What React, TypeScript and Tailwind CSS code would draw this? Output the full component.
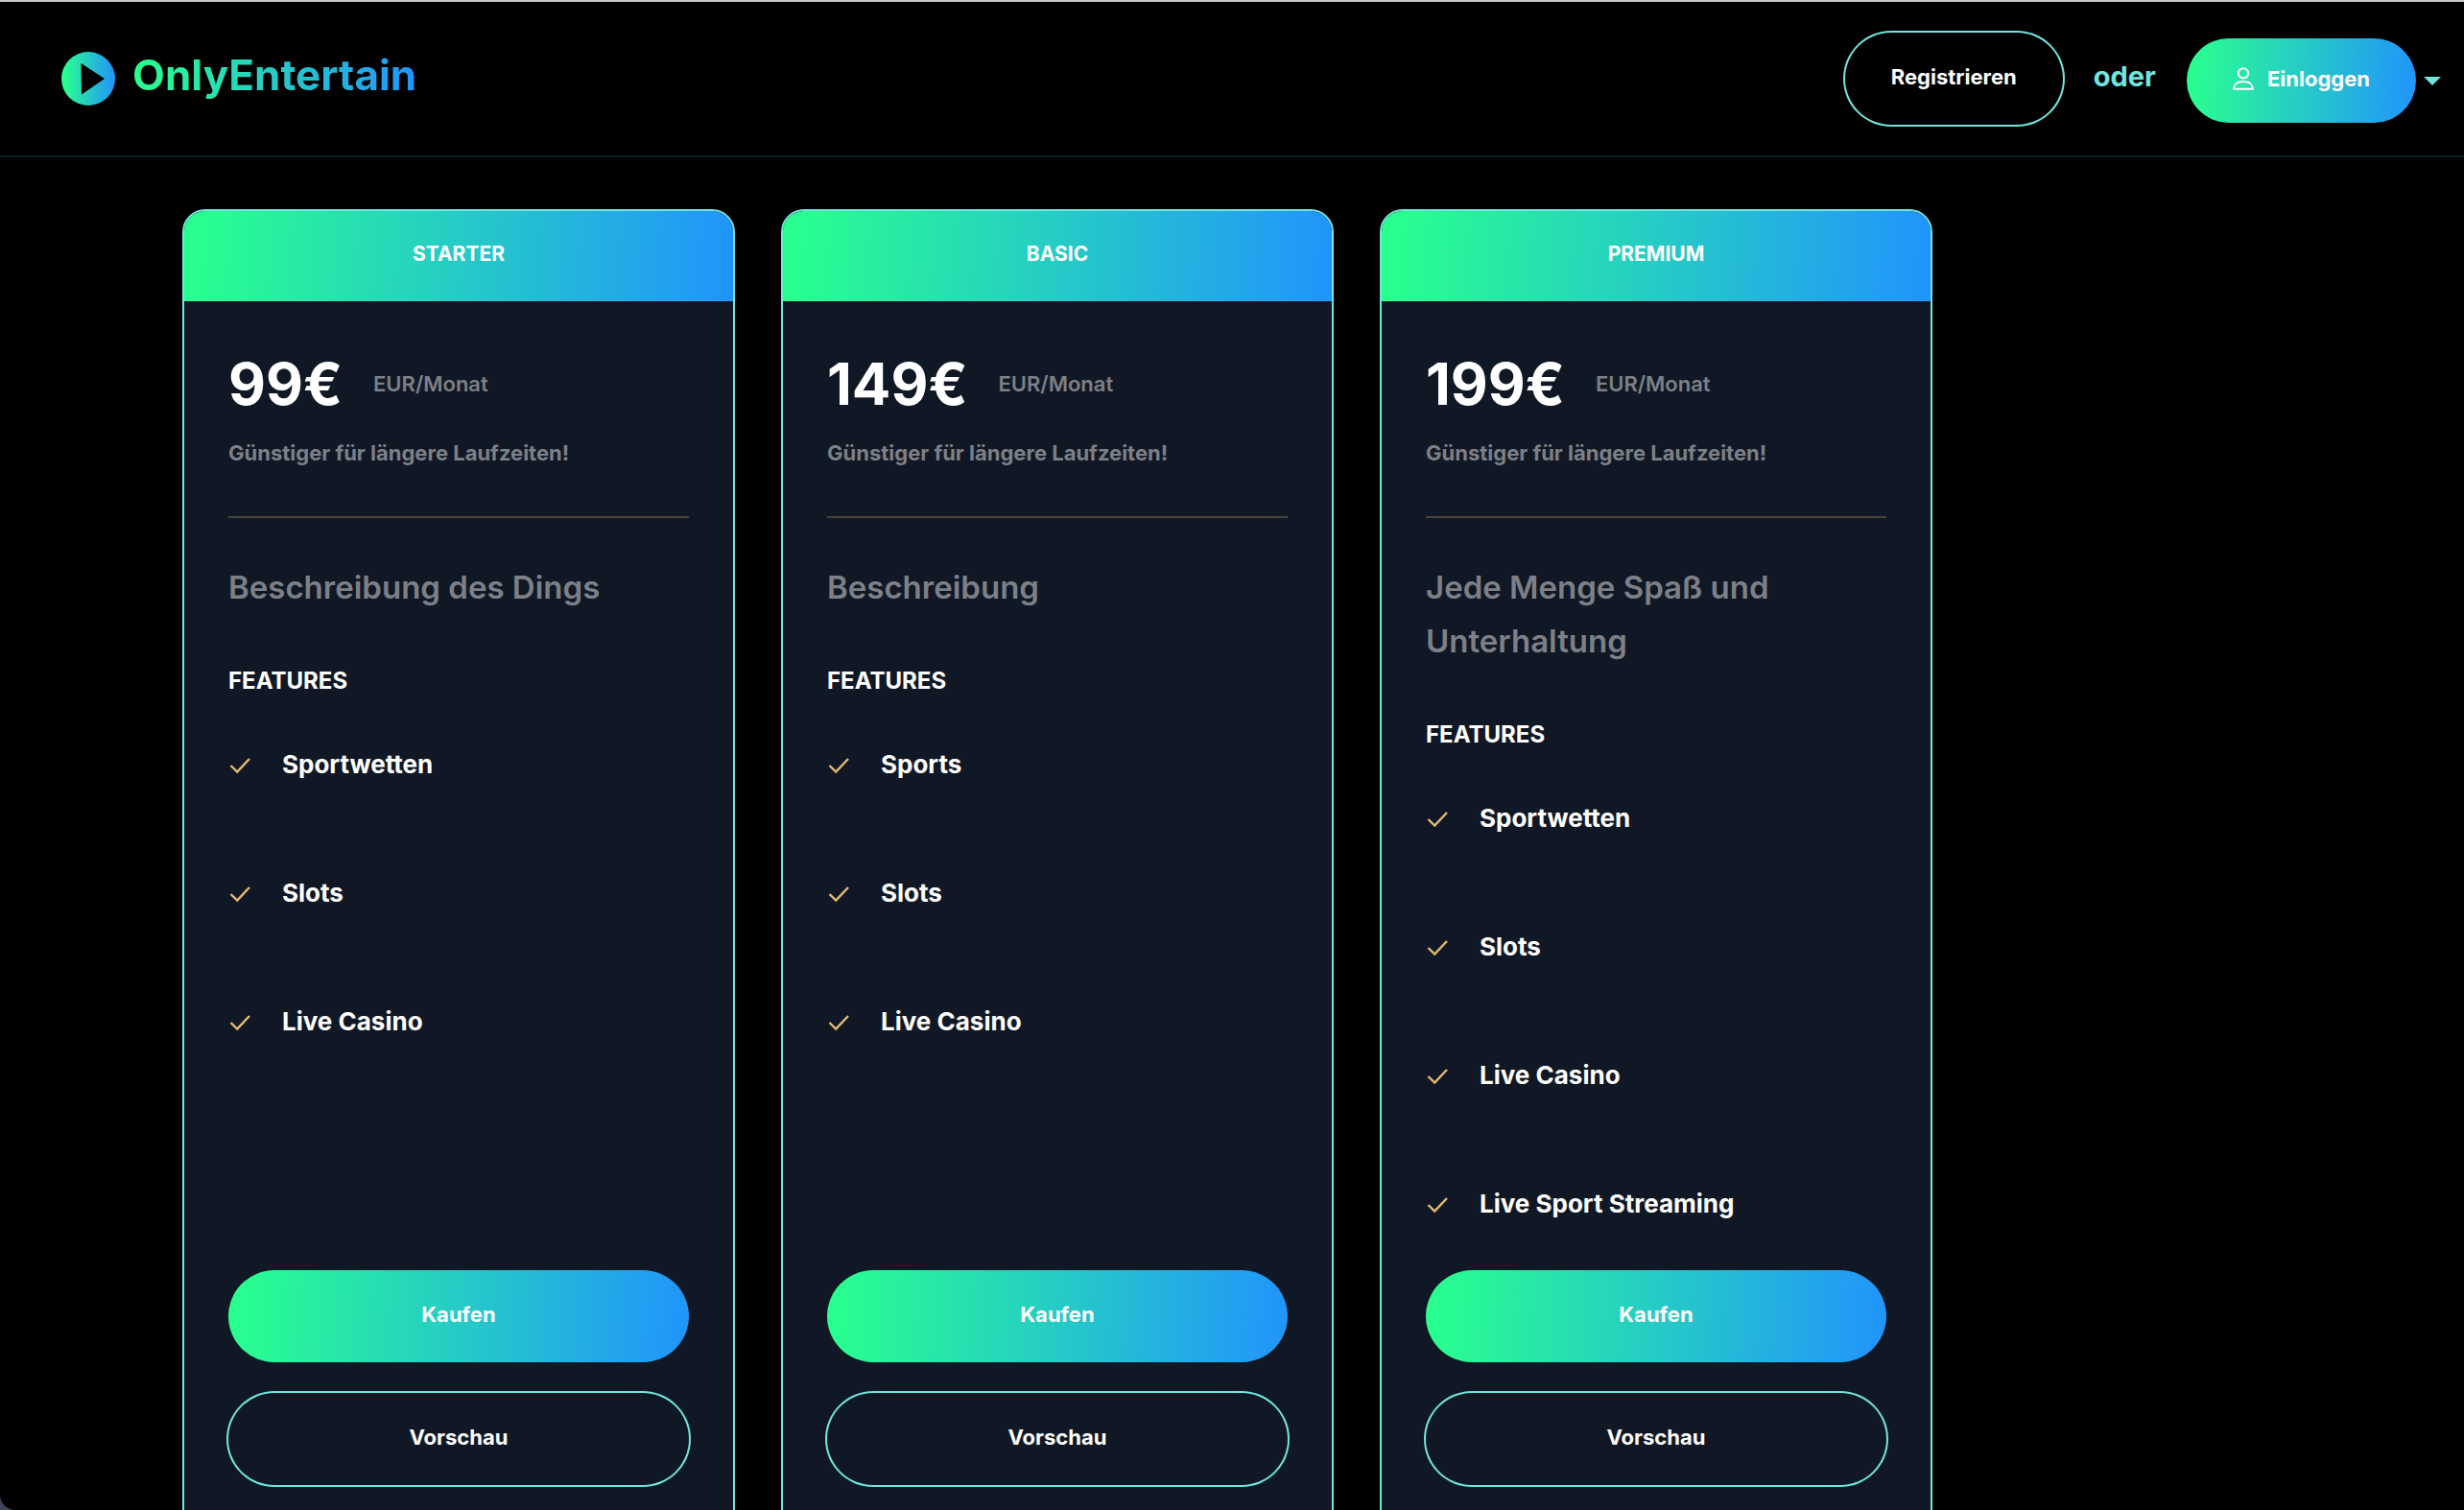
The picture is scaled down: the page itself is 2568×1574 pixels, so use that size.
import clsx from "clsx";

interface Plan {
  name: string;
  price: string;
  description: string;
  features: string[];
}

const plans: Plan[] = [
  {
    name: "Starter",
    price: "99€",
    description: "Beschreibung des Dings",
    features: ["Sportwetten", "Slots", "Live Casino"],
  },
  {
    name: "Basic",
    price: "149€",
    description: "Beschreibung",
    features: ["Sports", "Slots", "Live Casino"],
  },
  {
    name: "Premium",
    price: "199€",
    description: "Jede Menge Spaß und Unterhaltung",
    features: ["Sportwetten", "Slots", "Live Casino", "Live Sport Streaming"],
  },
];

const gradient = "bg-[linear-gradient(93deg,#29ff8f_2%,#26cbc6_50%,#2196fa_98%)]";

const buttonBase =
  "flex items-center justify-center rounded-[48px] pb-1 text-[22px] font-bold leading-8 text-white";

function LogoMark() {
  return (
    <svg aria-hidden="true" className="size-14" viewBox="0 0 56 56">
      <defs>
        <linearGradient id="logo-mark" x1="0" x2="1" y1="0" y2="0">
          <stop offset="0.05" stopColor="#29ff8f" />
          <stop offset="0.5" stopColor="#26cbc6" />
          <stop offset="0.98" stopColor="#2196fa" />
        </linearGradient>
      </defs>
      <circle cx="28" cy="28" fill="url(#logo-mark)" r="28" />
      <path d="M20.5 12 L45 28 L21 44.5 Z" fill="#000" />
    </svg>
  );
}

function UserIcon() {
  return (
    <svg
      aria-hidden="true"
      className="h-6 w-[22px]"
      fill="none"
      stroke="currentColor"
      strokeWidth="2"
      viewBox="0 0 22 24"
    >
      <circle cx="11" cy="6.4" r="5.2" />
      <path d="M1.2 22.8 C1.2 17.8 4.8 15.2 8.6 15.2 H13.4 C17.2 15.2 20.8 17.8 20.8 22.8 Z" />
    </svg>
  );
}

function CheckIcon() {
  return (
    <svg
      aria-hidden="true"
      className="h-6 w-6 shrink-0"
      fill="none"
      stroke="#e5ba73"
      strokeWidth="2.4"
      viewBox="0 0 24 24"
    >
      <path d="M2.5 13 L9.2 19.5 L22 6" />
    </svg>
  );
}

function Header() {
  return (
    <header className="flex h-[164px] items-center justify-between border-t-2 border-b-2 border-t-[#c8c8c8] border-b-[#0f1a1e] pr-6 pl-16">
      <a className="flex items-center gap-[18px]" href="#home">
        <LogoMark />
        <span
          className={clsx(
            gradient,
            "mb-1 bg-clip-text pb-1 text-[44px] font-bold leading-[56px] text-transparent",
          )}
        >
          OnlyEntertain
        </span>
      </a>
      <div className="flex items-center">
        <button
          className={clsx(buttonBase, "h-24 px-12 ring-2 ring-[#71e5dd]")}
          type="button"
        >
          Registrieren
        </button>
        <span className="ml-8 pb-1 text-[29px] font-bold leading-10 text-[#71e5dd]">oder</span>
        <div className="ml-8 flex items-center gap-2 pt-1">
          <button
            className={clsx(buttonBase, gradient, "h-[88px] gap-[14px] px-12")}
            type="button"
          >
            <UserIcon />
            Einloggen
          </button>
          <svg aria-hidden="true" className="h-[9px] w-[18px]" viewBox="0 0 18 9">
            <path d="M0 0 H18 L9 9 Z" fill="#71e5dd" />
          </svg>
        </div>
      </div>
    </header>
  );
}

function PlanCard({ plan }: { plan: Plan }) {
  return (
    <article className="flex flex-col overflow-hidden rounded-3xl border-2 border-[#71e5dd] bg-[#111825]">
      <h2
        className={clsx(
          gradient,
          "pt-[25px] pb-[29px] text-center text-[21px] font-bold uppercase leading-10",
        )}
      >
        {plan.name}
      </h2>
      <div className="flex flex-1 flex-col px-[46px] py-12">
        <div className="flex items-center gap-8 leading-[76px]">
          <span className="text-[60px] font-bold">{plan.price}</span>
          <span className="text-[22px] font-semibold text-[#7d8087]">EUR/Monat</span>
        </div>
        <p className="mt-4 text-[22px] font-bold leading-9 text-[#7d8087]">
          Günstiger für längere Laufzeiten!
        </p>
        <hr className="mt-12 border-t-2 border-[#4a423c]" />
        <p className="mt-11 text-[33px] font-semibold leading-[56px] text-[#7d8087]">
          {plan.description}
        </p>
        <h3 className="mt-12 text-2xl font-bold uppercase leading-[44px]">Features</h3>
        <ul className="mt-11 mb-12 flex flex-col gap-[92px]">
          {plan.features.map((feature) => (
            <li
              className="flex items-center gap-8 text-[26px] font-bold leading-[42px]"
              key={feature}
            >
              <CheckIcon />
              {feature}
            </li>
          ))}
        </ul>
        <div className="mt-auto flex flex-col gap-8">
          <button className={clsx(buttonBase, gradient, "h-24")} type="button">
            Kaufen
          </button>
          <button className={clsx(buttonBase, "h-24 ring-2 ring-[#71e5dd]")} type="button">
            Vorschau
          </button>
        </div>
      </div>
    </article>
  );
}

export default function App() {
  return (
    <div className="h-screen bg-[#3d4558] font-[Inter,sans-serif] text-white">
      <div className="h-full overflow-y-auto rounded-bl-2xl bg-black [scrollbar-width:none]">
        <Header />
        <main className="pt-[54px] pb-24 pl-[190px]">
          <div className="grid max-w-[1824px] grid-cols-3 gap-12">
            {plans.map((plan) => (
              <PlanCard key={plan.name} plan={plan} />
            ))}
          </div>
        </main>
      </div>
    </div>
  );
}
